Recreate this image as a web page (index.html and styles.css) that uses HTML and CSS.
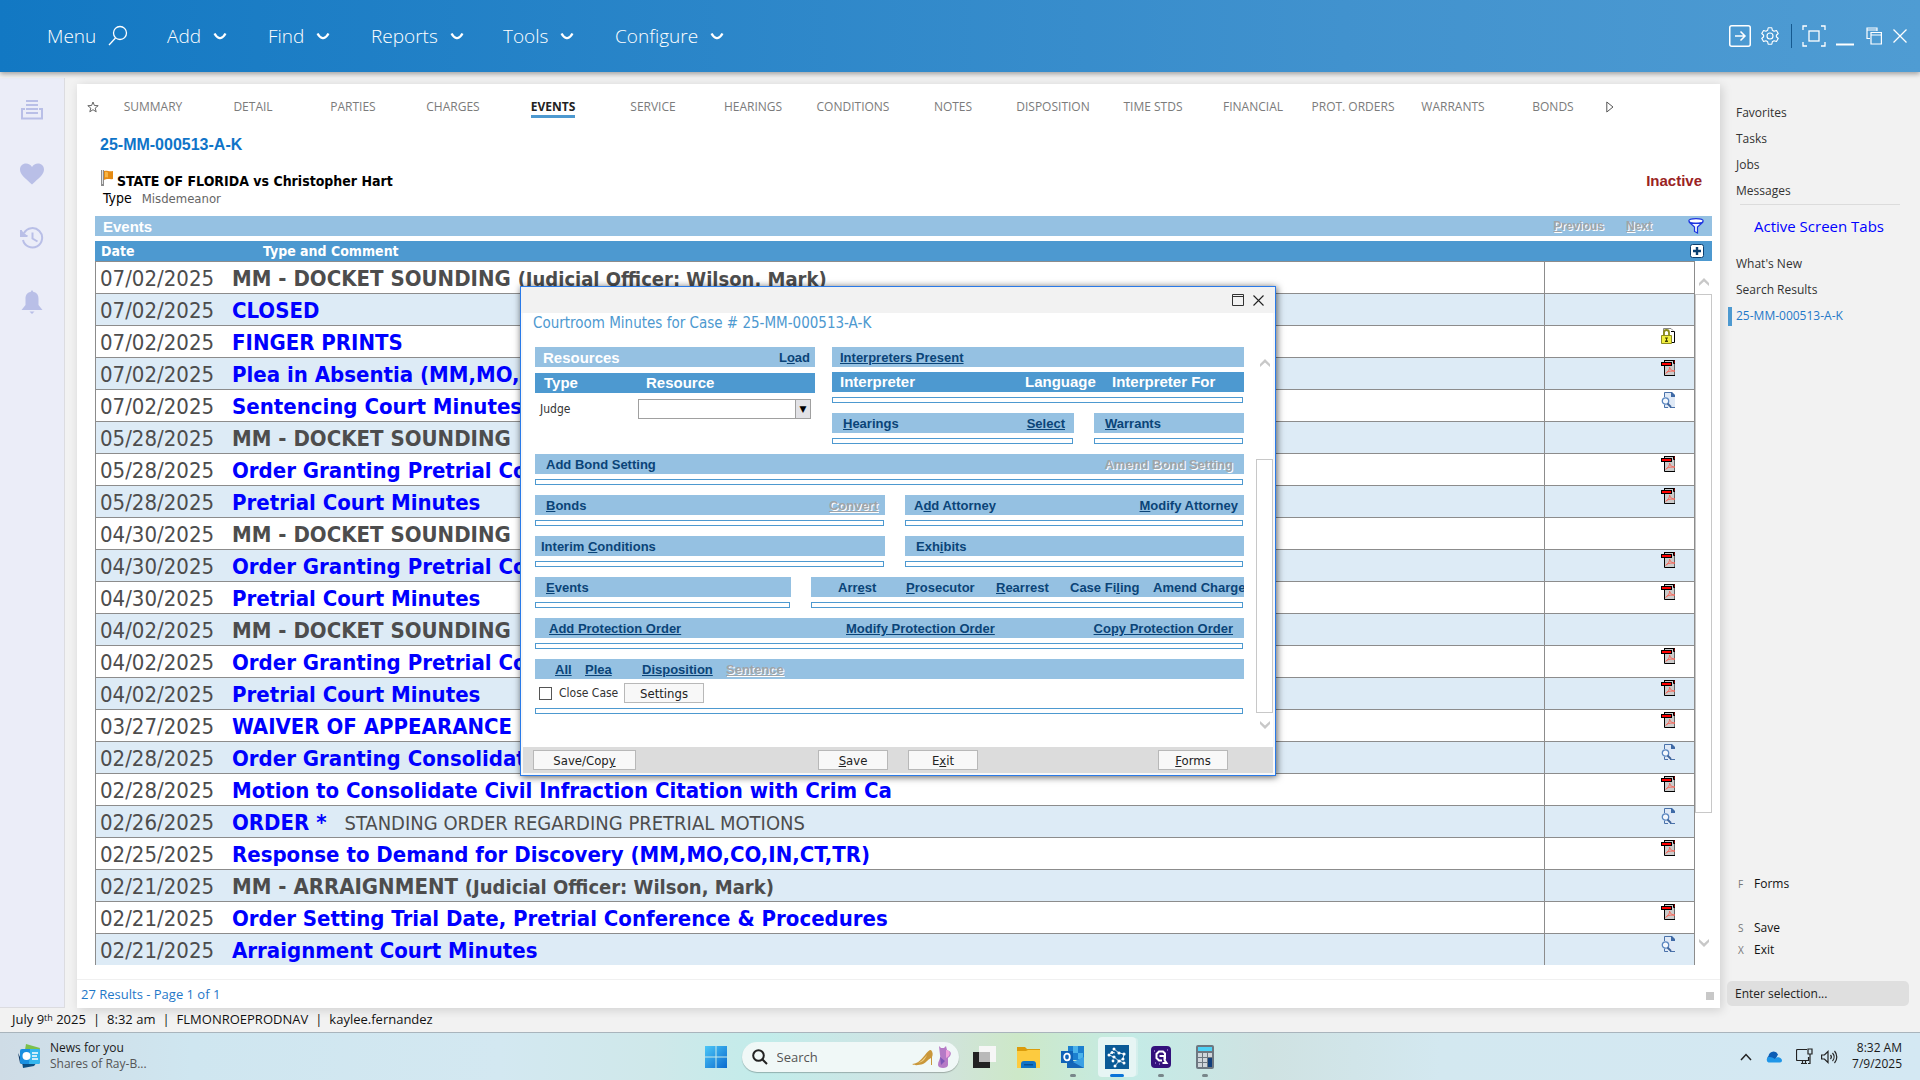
FILE: index.html
```html
<!DOCTYPE html>
<html lang="en">
<head>
<meta charset="utf-8">
<title>25-MM-000513-A-K - Events</title>
<link rel="stylesheet" href="styles.css">
</head>
<body>
<svg class="sprite" aria-hidden="true">
  <symbol id="chev" viewBox="0 0 14 9"><path d="M1.500 1.500 Q3.500 5.500 7 6.300 Q10.500 5.500 12.500 1.500" fill="none" stroke="currentColor" stroke-width="2.200"/></symbol>
  <symbol id="arrow" viewBox="0 0 12 9"><path d="M1 8V5L6 0l5 5v3L6 3.500z" fill="#c8c8c8"/></symbol>
  <symbol id="pdf" viewBox="0 0 14 16">
    <path d="M3.500 0V15.500H14V.5H3.500" fill="#cbcbcb" stroke="#000"/>
    <path d="M0 2h11v4H0z"/><path d="M1 3h9v2H1z" fill="#f00"/>
    <path d="M12.500 0v3.500H14V0z" fill="#f00" stroke="#000"/>
    <path d="M4.500 13.500C7 12 9 9 8.500 7c1 3 3 4.500 5.500 4M5.500 12.500c2-1.500 5-1.500 8.500-1.500" fill="none" stroke="#f8675a"/>
  </symbol>
  <symbol id="doc" viewBox="0 0 14 16">
    <path d="M3 0H11l3 3V16H3z" fill="#dfe9f6"/><path d="M3.500 5V.5H11M3.500 12.500v3H7M9 15.500h5" fill="none" stroke="#4a72aa"/><path d="M10 0h1l3 3v2h-4z" fill="#3f6aa6"/>
    <circle cx="4.500" cy="9" r="3.200" fill="#f4f8fd" stroke="#5a86bf" stroke-width="1.300"/><path d="M6.500 11.500L10 15" stroke="#41669b" stroke-width="1.800"/>
  </symbol>
  <symbol id="lock" viewBox="0 0 14 16">
    <path d="M2.500 7V.5H10l2 2" fill="#fff" stroke="#888"/><path d="M10 3.500h3.500v11H11" fill="none" stroke="#000"/>
    <path d="M3 8V4.500a2.500 2.500 0 0 1 5 0V8" fill="none" stroke="#8a8a18" stroke-width="1.800"/>
    <path d="M.5 7.500h10v8H.5z" fill="#f0ee3f" stroke="#8d8b20"/><path d="M4 9.500h3v1H6v2h1v1.500H4v-1.500h1v-2H4z" fill="#454500"/>
  </symbol>
</svg>

<header class="topbar">
  <nav class="menu" aria-label="Main menu">
    <button class="menu-item menu-home">Menu <svg width="20" height="22" viewBox="0 0 20 22" fill="none" stroke="#fff" stroke-width="1.300"><circle cx="12" cy="8" r="6.500"/><path d="M7.500 13L1 20"/></svg></button>
    <button class="menu-item menu-add">Add <svg width="14" height="9"><use href="#chev"/></svg></button>
    <button class="menu-item menu-find">Find <svg width="14" height="9"><use href="#chev"/></svg></button>
    <button class="menu-item menu-reports">Reports <svg width="14" height="9"><use href="#chev"/></svg></button>
    <button class="menu-item menu-tools">Tools <svg width="14" height="9"><use href="#chev"/></svg></button>
    <button class="menu-item">Configure <svg width="14" height="9"><use href="#chev"/></svg></button>
  </nav>
  <div class="window-tools">
    <button aria-label="Sign out"><svg width="22" height="22" viewBox="0 0 22 22" fill="none" stroke="#fff" stroke-width="1.500"><rect x=".75" y=".75" width="20.500" height="20.500" rx="2"/><path d="M6 11h10M11.500 6.500L16 11l-4.500 4.500"/></svg></button>
    <button aria-label="Settings"><svg width="18" height="18" viewBox="0 0 24 24" fill="none" stroke="#fff" stroke-width="1.500" stroke-linejoin="round"><circle cx="12" cy="12" r="4"/><path d="M9.600 1h4.800l.7 3.300 2.300 1.300 3.200-1 2.400 4.100-2.500 2.300v2l2.500 2.300-2.400 4.100-3.200-1-2.300 1.300-.7 3.300H9.600l-.7-3.300-2.300-1.300-3.200 1L1 15.300 3.500 13v-2L1 8.700l2.400-4.100 3.200 1 2.300-1.300z"/></svg></button>
    <span class="divider"></span>
    <button aria-label="Full screen"><svg width="24" height="22" viewBox="0 0 24 22" fill="none" stroke="#fff" stroke-width="1.300"><path d="M1 5V1h4M19 1h4v4M23 17v4h-4M5 21H1v-4"/><rect x="7" y="6" width="10" height="10"/></svg></button>
    <button aria-label="Minimize"><svg width="18" height="22" viewBox="0 0 18 22"><path d="M0 18.500h18v2H0z" fill="#fff"/></svg></button>
    <button aria-label="Restore" class="restore"><svg width="16" height="18" viewBox="0 0 16 18" fill="none" stroke="#fff" stroke-width="1.200"><path d="M4 11.500H1V1h10v3M1 3h10"/><path d="M5 5.500h10.400V17H5zM5 8h10.400"/></svg></button>
    <button aria-label="Close"><svg width="14" height="14" viewBox="0 0 14 14" stroke="#fff" stroke-width="1.300"><path d="M.5.5l13 13M13.500.5l-13 13"/></svg></button>
  </div>
</header>

<div class="workspace">
  <aside class="rail" aria-label="Shortcuts">
    <button aria-label="Worklist"><svg width="22" height="22" viewBox="0 0 22 22" fill="none" stroke="#b9bfe7" stroke-width="2"><path d="M5 2h12M5 6h12M5 10h12M5 14h12M4 10H1v9.500h20V10h-3"/></svg></button>
    <button aria-label="Favorites"><svg width="24" height="22" viewBox="0 0 24 22" fill="#b9bfe7"><path d="M12 21.500C5 15 0 11.500 0 6.500 0 3 2.600.5 6 .5c2.500 0 4.800 1.300 6 3.500C13.200 1.800 15.500.5 18 .5c3.400 0 6 2.500 6 6 0 5-5 8.500-12 15z"/></svg></button>
    <button aria-label="History"><svg width="24" height="22" viewBox="0 0 24 22" fill="none" stroke="#b9bfe7" stroke-width="2"><path d="M4 6a9.700 9.700 0 1 1-1 7"/><path d="M1 3v6h6.500" fill="#b9bfe7"/><path d="M12.500 5.500v6l5 3"/></svg></button>
    <button aria-label="Notifications"><svg width="22" height="24" viewBox="0 0 22 24" fill="#b9bfe7"><path d="M11 0l1.500 2C16 2.500 17.500 5 17.500 9v6l4 5H.5l4-5V9C4.500 5 6 2.500 9.500 2zM8.500 21.500h5L11 24z"/></svg></button>
  </aside>

  <main class="panel">
    <nav class="tabs" aria-label="Case tabs">
      <svg class="star" width="12" height="12" viewBox="0 0 12 12" fill="none" stroke="#666"><path d="M6 1l1.400 3.500 3.800.2-3 2.400 1 3.700L6 8.700l-3.200 2.100 1-3.700-3-2.400 3.800-.2z"/></svg>
      <a href="#">SUMMARY</a><a href="#">DETAIL</a><a href="#">PARTIES</a><a href="#">CHARGES</a><a href="#" class="current"><span>EVENTS</span></a><a href="#">SERVICE</a><a href="#">HEARINGS</a><a href="#">CONDITIONS</a><a href="#">NOTES</a><a href="#">DISPOSITION</a><a href="#">TIME STDS</a><a href="#">FINANCIAL</a><a href="#">PROT. ORDERS</a><a href="#">WARRANTS</a><a href="#">BONDS</a>
      <svg width="8" height="12" viewBox="0 0 8 12" fill="none" stroke="#555"><path d="M.8 1v10L7 6z"/></svg>
    </nav>
    <h1 class="case-no">25-MM-000513-A-K</h1>
    <div class="party">
      <svg width="14" height="16" viewBox="0 0 14 16"><path d="M1 0h3v16H1z" fill="#8c8c8c"/><path d="M2 0h1v14H2z" fill="#e2e2e2"/><path d="M4 1c3-1 5 1 9 0v8c-3 1-5-1-9 1z" fill="#e58a12"/><path d="M5 2c1-.5 2 0 3 .5v5c-1 0-2-.5-3 0z" fill="#f8b545"/></svg>
      <h2>STATE OF FLORIDA vs Christopher Hart</h2>
      <strong>Inactive</strong>
    </div>
    <p class="case-type">Type <span>Misdemeanor</span></p>

    <section class="events">
      <div class="bar events-bar">
        <h3>Events</h3>
        <a class="off" href="#"><u>P</u>revious</a>
        <a class="off" href="#"><u>N</u>ext</a>
        <button aria-label="Filter"><svg width="16" height="16" viewBox="0 0 16 16" fill="#fff" stroke="#1d35e0" stroke-width="1.200"><ellipse cx="8" cy="3" rx="7.200" ry="2.400"/><path d="M1 4l5.500 5v4.500L9.500 15V9L15 4c-2 1.800-12 1.800-14 0z" fill="#eef2ff"/></svg></button>
      </div>
      <div class="bar dark cols-bar">
        <span>Date</span><span>Type and Comment</span>
        <button aria-label="Add event"><svg width="14" height="14" viewBox="0 0 14 14"><rect x=".5" y=".5" width="13" height="13" rx="2" fill="#fff" stroke="#0b3f70"/><path d="M7 3v8M3 7h8" stroke="#0b3f70" stroke-width="2.400"/></svg></button>
      </div>
      <div class="list">
        <table aria-label="Events">
          <colgroup><col class="c-date"><col><col class="c-icon"></colgroup>
          <tbody>
            <tr><td>07/02/2025</td><td><b>MM - DOCKET SOUNDING <small>(Judicial Officer: Wilson, Mark)</small></b></td><td></td></tr>
            <tr><td>07/02/2025</td><td><a href="#">CLOSED</a></td><td></td></tr>
            <tr><td>07/02/2025</td><td><a href="#">FINGER PRINTS</a></td><td><svg><use href="#lock"/></svg></td></tr>
            <tr><td>07/02/2025</td><td><a href="#">Plea in Absentia (MM,MO,CO,IN,CT,TR)</a></td><td><svg><use href="#pdf"/></svg></td></tr>
            <tr><td>07/02/2025</td><td><a href="#">Sentencing Court Minutes</a></td><td><svg><use href="#doc"/></svg></td></tr>
            <tr><td>05/28/2025</td><td><b>MM - DOCKET SOUNDING</b></td><td></td></tr>
            <tr><td>05/28/2025</td><td><a href="#">Order Granting Pretrial Continuance</a></td><td><svg><use href="#pdf"/></svg></td></tr>
            <tr><td>05/28/2025</td><td><a href="#">Pretrial Court Minutes</a></td><td><svg><use href="#pdf"/></svg></td></tr>
            <tr><td>04/30/2025</td><td><b>MM - DOCKET SOUNDING</b></td><td></td></tr>
            <tr><td>04/30/2025</td><td><a href="#">Order Granting Pretrial Continuance</a></td><td><svg><use href="#pdf"/></svg></td></tr>
            <tr><td>04/30/2025</td><td><a href="#">Pretrial Court Minutes</a></td><td><svg><use href="#pdf"/></svg></td></tr>
            <tr><td>04/02/2025</td><td><b>MM - DOCKET SOUNDING</b></td><td></td></tr>
            <tr><td>04/02/2025</td><td><a href="#">Order Granting Pretrial Continuance</a></td><td><svg><use href="#pdf"/></svg></td></tr>
            <tr><td>04/02/2025</td><td><a href="#">Pretrial Court Minutes</a></td><td><svg><use href="#pdf"/></svg></td></tr>
            <tr><td>03/27/2025</td><td><a href="#">WAIVER OF APPEARANCE</a></td><td><svg><use href="#pdf"/></svg></td></tr>
            <tr><td>02/28/2025</td><td><a href="#">Order Granting Consolidation</a></td><td><svg><use href="#doc"/></svg></td></tr>
            <tr><td>02/28/2025</td><td><a href="#">Motion to Consolidate Civil Infraction Citation with Crim Ca</a></td><td><svg><use href="#pdf"/></svg></td></tr>
            <tr><td>02/26/2025</td><td><a href="#">ORDER *</a><small class="comment">STANDING ORDER REGARDING PRETRIAL MOTIONS</small></td><td><svg><use href="#doc"/></svg></td></tr>
            <tr><td>02/25/2025</td><td><a href="#">Response to Demand for Discovery (MM,MO,CO,IN,CT,TR)</a></td><td><svg><use href="#pdf"/></svg></td></tr>
            <tr><td>02/21/2025</td><td><b>MM - ARRAIGNMENT <small>(Judicial Officer: Wilson, Mark)</small></b></td><td></td></tr>
            <tr><td>02/21/2025</td><td><a href="#">Order Setting Trial Date, Pretrial Conference &amp; Procedures</a></td><td><svg><use href="#pdf"/></svg></td></tr>
            <tr><td>02/21/2025</td><td><a href="#">Arraignment Court Minutes</a></td><td><svg><use href="#doc"/></svg></td></tr>
          </tbody>
        </table>
        <div class="scroll scroll-list">
          <svg width="12" height="9"><use href="#arrow"/></svg>
          <div class="track"><div class="thumb"></div></div>
          <svg class="down" width="12" height="9"><use href="#arrow"/></svg>
        </div>
      </div>
    </section>
    <footer class="panel-foot"><span>27 Results - Page 1 of 1</span><i></i></footer>
  </main>

  <aside class="side">
    <nav class="side-nav" aria-label="Workspace">
      <a href="#">Favorites</a><a href="#">Tasks</a><a href="#">Jobs</a><a href="#">Messages</a>
    </nav>
    <h2>Active Screen Tabs</h2>
    <nav class="side-nav" aria-label="Active screen tabs">
      <a href="#">What's New</a><a href="#">Search Results</a><a href="#" class="current">25-MM-000513-A-K</a>
    </nav>
    <div class="commands">
      <a href="#" class="forms"><kbd>F</kbd>Forms</a>
      <a href="#"><kbd>S</kbd>Save</a>
      <a href="#"><kbd>X</kbd>Exit</a>
    </div>
    <input class="selection" type="text" placeholder="Enter selection..." aria-label="Enter selection">
  </aside>
</div>

<div class="status"><span>July 9<sup>th</sup> 2025</span><span>|</span><span>8:32 am</span><span>|</span><span>FLMONROEPRODNAV</span><span>|</span><span>kaylee.fernandez</span></div>

<section class="dialog" role="dialog" aria-labelledby="dlg-title">
  <div class="dlg-title">
    <button aria-label="Maximize"><svg width="12" height="12" viewBox="0 0 12 12" fill="none" stroke="#333"><path d="M.5.5h11v11H.5zM.5 2.500h11"/></svg></button>
    <button aria-label="Close"><svg width="11" height="11" viewBox="0 0 11 11" stroke="#222" stroke-width="1.100"><path d="M.5.5l10 10M10.500.5l-10 10"/></svg></button>
  </div>
  <div class="dlg-body">
    <h2 id="dlg-title">Courtroom Minutes for Case # 25-MM-000513-A-K</h2>
    <div class="dlg-cols">
      <div class="dlg-content">
        <div class="split split-top">
          <div class="resources">
            <div class="bar b-resources"><h3>Resources</h3><a href="#">L<u>o</u>ad</a></div>
            <div class="bar dark b-type"><span>Type</span><span>Resource</span></div>
            <div class="judge"><label for="judge">Judge</label><span class="combo"><select id="judge"><option></option></select></span></div>
          </div>
          <div>
            <div class="bar b-one"><a href="#" class="full">Interpreters Present</a></div>
            <div class="bar dark b-interp"><span>Interpreter</span><span>Language</span><span>Interpreter For</span></div>
            <div class="strip"></div>
            <div class="split split-hear">
              <div><div class="bar b-hear"><a href="#"><u>H</u>earings</a><a href="#" class="full">Select</a></div><div class="strip"></div></div>
              <div><div class="bar b-hear"><a href="#"><u>W</u>arrants</a></div><div class="strip"></div></div>
            </div>
          </div>
        </div>
        <div class="bar b-pair"><a href="#">Add Bond Setting</a><a href="#" class="off">Amend Bond Setting</a></div>
        <div class="strip"></div>
        <div class="split split-mid">
          <div>
            <div class="bar b-bonds"><a href="#"><u>B</u>onds</a><a href="#" class="off full">Convert</a></div><div class="strip"></div>
            <div class="bar b-interim"><a href="#">Interim <u>C</u>onditions</a></div><div class="strip"></div>
          </div>
          <div>
            <div class="bar b-attorney"><a href="#">A<u>d</u>d Attorney</a><a href="#"><u>M</u>odify Attorney</a></div><div class="strip"></div>
            <div class="bar b-pair"><a href="#">Exh<u>i</u>bits</a></div><div class="strip"></div>
          </div>
        </div>
        <div class="split split-events">
          <div><div class="bar b-pair"><a href="#"><u>E</u>vents</a></div><div class="strip"></div></div>
          <div><div class="bar b-arrest"><a href="#">Arr<u>e</u>st</a><a href="#"><u>P</u>rosecutor</a><a href="#"><u>R</u>earrest</a><a href="#">Case Fi<u>l</u>ing</a><a href="#">Amend Char<u>g</u>e</a></div><div class="strip"></div></div>
        </div>
        <div class="bar b-protect"><a href="#" class="full">Add Protection Order</a><a href="#" class="full">Modify Protection Order</a><a href="#" class="full">Copy Protection Order</a></div>
        <div class="strip"></div>
        <div class="bar b-all"><a href="#" class="full">All</a><a href="#" class="full">Plea</a><a href="#" class="full">Disposition</a><a href="#" class="off full">Sentence</a></div>
        <div class="close-case"><label><input type="checkbox"> Close Case</label><button class="btn">Settings</button></div>
        <div class="strip"></div>
      </div>
      <div class="scroll scroll-dlg">
        <svg width="12" height="9"><use href="#arrow"/></svg>
        <div class="track"><div class="thumb"></div></div>
        <svg class="down" width="12" height="9"><use href="#arrow"/></svg>
      </div>
    </div>
  </div>
  <div class="dlg-foot">
    <button class="btn copy">Save/Cop<u>y</u></button><button class="btn"><u>S</u>ave</button><button class="btn">E<u>x</u>it</button><button class="btn last"><u>F</u>orms</button>
  </div>
</section>

<footer class="taskbar">
  <button class="news">
    <svg width="24" height="24" viewBox="0 0 24 24"><path d="M8 0l14 4-2 8H6z" fill="#7cc04b"/><path d="M3 10l16 8-3 4-11 2z" fill="#0b4f84"/><path d="M0 9l6 12-4-2z" fill="#123a66"/><rect x="2" y="5" width="20" height="15" rx="2" fill="#1a8fe0"/><path d="M12 5h8a2 2 0 0 1 2 2v11a2 2 0 0 1-2 2h-9z" fill="#35b6ee"/><circle cx="8.500" cy="12" r="4" fill="#fff"/><path d="M14 9h6M14 12h5M14 15h6" stroke="#fff" stroke-width="1.500"/></svg>
    <span>News for you<small>Shares of Ray-B...</small></span>
  </button>
  <div class="apps">
    <button aria-label="Start"><svg width="22" height="24" viewBox="0 0 22 24"><defs><linearGradient id="win" x1="0" y1="0" x2="1" y2="1"><stop offset="0" stop-color="#4cc7f7"/><stop offset="1" stop-color="#0a6bd0"/></linearGradient></defs><path d="M0 1h10.500v10.500H0zM11.500 1H22v10.500H11.500zM0 12.500h10.500V23H0zM11.500 12.500H22V23H11.500z" fill="url(#win)"/></svg></button>
    <label class="search">
      <svg width="16" height="16" viewBox="0 0 16 16" fill="none" stroke="#222" stroke-width="2"><circle cx="6.500" cy="6.500" r="5.300"/><path d="M10.500 10.500L15 15"/></svg>
      <input type="text" placeholder="Search" aria-label="Search">
      <svg width="40" height="24" viewBox="0 0 40 24"><path d="M1 19c5 0 9-4 13-9 2-3 4-5 6-5 2 2 2 5 1 7v8h-1v-7c-3 1-5 5-8 6-4 1-8 2-11 0z" fill="#c9973a"/><path d="M5 18c5 0 8-5 11-8-2 5-5 8-11 8z" fill="#f0d28a"/><path d="M28 1l2 2h3l2-2 1 4 2 1c3 1 2 5-1 7v7c0 4-10 4-10 0 0-4 3-6 2-10z" fill="#b57ac6"/><path d="M35 5c5 0 5 6 0 8z" fill="#f0a0dc"/><path d="M29 12l5 4-4 4z" fill="#7e57b8"/></svg>
    </label>
    <button aria-label="Task view"><svg width="24" height="24" viewBox="0 0 24 24"><rect x="6" y="1" width="17" height="16" fill="#f6f6f6"/><rect x="0" y="7" width="17" height="16" fill="#222"/><rect x="6" y="7" width="11" height="10" fill="#b9b9b9"/></svg></button>
    <button aria-label="File Explorer"><svg width="24" height="24" viewBox="0 0 24 24"><path d="M0 2h8l2 2h13v8H0z" fill="#dc9c0b"/><path d="M0 6h9l2-1h12v18H0z" fill="#fdcb3f"/><path d="M4 23v-4a3 3 0 0 1 3-3h9a3 3 0 0 1 3 3v4z" fill="#1173c7"/><path d="M7 19h9v1.500H7z" fill="#0a4f92"/></svg></button>
    <button aria-label="Outlook" class="running"><svg width="24" height="24" viewBox="0 0 24 24"><path d="M7 1h16v14H7z" fill="#1b7fd0"/><path d="M12 1h5v7h-5zM17 8h5v6h-5z" fill="#4bb3ea"/><path d="M6 13l9 4 8-5v11H6z" fill="#1566b8"/><path d="M23 12v11L12 17z" fill="#3aa0e4"/><rect x="0" y="6" width="12" height="12" fill="#0f63b8"/><ellipse cx="6" cy="12" rx="2.800" ry="3.300" fill="none" stroke="#fff" stroke-width="1.800"/></svg></button>
    <button aria-label="Case management" class="running active"><svg width="24" height="24" viewBox="0 0 24 24"><path d="M0 0h24v24H0z" fill="#0a5a97"/><path d="M9 4l5 4 5 1-1 5-4 2-5-4-5-2 3-3 3 1M14 16l-4 5M14 16l5 2" stroke="#fff" stroke-width=".8" fill="none"/><g fill="#fff"><circle cx="9" cy="4" r="1.500"/><circle cx="14" cy="8" r="1.600"/><circle cx="19" cy="9" r="1.600"/><circle cx="7" cy="7.500" r="1.500"/><circle cx="4" cy="10" r="1.500"/><circle cx="9" cy="12" r="1.600"/><circle cx="14" cy="16" r="1.600"/><circle cx="18" cy="14" r="1.500"/><circle cx="19" cy="18" r="1.500"/><circle cx="10" cy="21" r="1.500"/><circle cx="8" cy="16" r="1.400"/></g></svg></button>
    <button aria-label="Q app" class="running"><svg width="20" height="22" viewBox="0 0 20 22"><rect width="20" height="22" rx="4" fill="#33107c"/><path d="M14 13.500V7.500L12 5.500H8L5.500 8v4L8 14.500h3M8.500 10h5v4l2 3h-4" fill="none" stroke="#fff" stroke-width="2"/><path d="M3 5h1M4 17h1M16 4h1M8 18h1" stroke="#d9b6ff"/></svg></button>
    <button aria-label="Calculator" class="running"><svg width="18" height="24" viewBox="0 0 18 24"><rect width="18" height="24" rx="2" fill="#6d7780"/><rect x="2" y="2" width="14" height="4" fill="#4fd1f5"/><g fill="#cfd5da"><path d="M2 8h4v4H2zM7 8h4v4H7zM12 8h4v4h-4zM2 13h4v4H2zM7 13h4v4H7zM2 18h4v4H2zM7 18h4v4H7z"/></g><path d="M12 13h4v9h-4z" fill="#123f7c"/></svg></button>
  </div>
  <div class="tray">
    <button aria-label="Show hidden icons"><svg width="12" height="8" viewBox="0 0 12 8" fill="none" stroke="#222" stroke-width="1.500"><path d="M1 7l5-5.500L11 7"/></svg></button>
    <button aria-label="OneDrive"><svg width="16" height="12" viewBox="0 0 16 12"><path d="M3 10A3 3 0 0 1 2.500 5 5 5 0 0 1 12 3.500L9 9z" fill="#0c5db5"/><path d="M2.500 11.500a3 3 0 0 1 0-5.500C5 5.500 8 7 9 8c1.500-3 7-1.500 7 1.500a2 2 0 0 1-2 2z" fill="#1f96e8"/></svg></button>
    <button aria-label="Network and volume" class="system"><svg width="17" height="17" viewBox="0 0 17 17" fill="none" stroke="#222" stroke-width="1.200"><path d="M11 1.500H1.500a1 1 0 0 0-1 1v9a1 1 0 0 0 1 1h11V9M5 15.500h6M6.500 12.500v3M9.500 12.500v3M12 1h4v5h-4zM14 6v9.500h-2"/></svg>
    <svg width="17" height="14" viewBox="0 0 17 14" fill="none" stroke="#222" stroke-width="1.200"><path d="M.6 5v4h2.800L7 12.500V1.500L3.400 5zM9.500 5a3 3 0 0 1 0 4M11.500 3a6 6 0 0 1 0 8M13.500 1a9 9 0 0 1 0 12"/></svg></button>
    <button class="clock">8:32 AM<br>7/9/2025</button>
  </div>
</footer>
</body>
</html>
```

FILE: styles.css
```css
:root {
  --ui: "Open Sans", "Noto Sans", sans-serif;
  --form: "DejaVu Sans Condensed", "Noto Sans", sans-serif;
  --label: "Liberation Sans", Arial, sans-serif;
  --bar: #95c1e2;
  --bar-dark: #4d99d0;
  --link: #0a4478;
}

* { box-sizing: border-box; }

body {
  margin: 0;
  min-height: 100vh;
  display: flex;
  flex-direction: column;
  position: relative;
  background: #f2f2f2;
  font: 12px/16px var(--ui);
  color: #333;
}

h1, h2, h3, p { margin: 0; font-size: inherit; }
a { color: inherit; text-decoration: none; }
button { padding: 0; border: 0; background: none; font: inherit; color: inherit; }
svg { display: block; flex: none; }
.sprite { position: absolute; width: 0; height: 0; }

/* top bar */
.topbar {
  height: 72px;
  padding: 0 13px 0 47px;
  display: flex;
  align-items: center;
  justify-content: space-between;
  background: linear-gradient(90deg, #1278c3, #4192ce 70%, #4f9cd3);
  box-shadow: 0 2px 5px rgba(0, 0, 0, .35);
  color: #fff;
  position: relative;
  z-index: 1;
}
.menu { display: flex; }
.menu-item { display: flex; align-items: center; gap: 12px; font-size: 19px; line-height: 26px; font-weight: 300; }
.menu-home { width: 120px; }
.menu-add { width: 101px; }
.menu-find { width: 103px; }
.menu-reports { width: 132px; }
.menu-tools { width: 112px; }
.window-tools { display: flex; align-items: center; gap: 10px; }
.divider { width: 1px; height: 24px; margin-left: 2px; background: #15598f; }
.restore { margin: 0 1px 0 2px; }

/* work area */
.workspace { flex: 1; display: flex; }
.rail {
  width: 65px;
  margin-top: 6px;
  padding-top: 12px;
  background: #ebedf8;
  border: solid #dcdce0;
  border-width: 0 1px 1px 0;
}
.rail button { width: 64px; height: 40px; margin-bottom: 24px; display: grid; place-items: center; }

.panel {
  flex: 1;
  min-width: 0;
  margin: 12px 0 0 12px;
  display: flex;
  flex-direction: column;
  background: #fff;
  box-shadow: 2px 2px 10px rgba(0, 0, 0, .15);
}
.tabs { height: 46px; display: flex; align-items: center; color: #7b7b7b; }
.tabs .star { margin: 0 4px 0 10px; }
.tabs a { width: 100px; text-align: center; }
.tabs a + svg { margin-left: 3px; }
.tabs .current { color: #222; font-weight: 700; }
.tabs .current span { border-bottom: 3px solid var(--bar-dark); }
.case-no { padding-left: 23px; font: 700 16px/30px var(--label); color: #0f74c8; }
.party { padding: 11px 18px 0 23px; display: flex; align-items: center; gap: 3px; line-height: 20px; }
.party h2 { flex: 1; font: 700 14px/20px var(--form); color: #000; }
.party svg { margin-top: -6px; }
.party strong { font: 700 15px/20px var(--label); color: #9a2323; }
.case-type { padding-left: 26px; font: 14px/15px var(--form); color: #000; }
.case-type span { margin-left: 6px; font-size: 13px; color: #666; }

.bar {
  height: 20px;
  overflow: hidden;
  white-space: nowrap;
  background: var(--bar);
  font: 700 13px/21px var(--label);
  color: var(--link);
}
.bar h3 { font-size: 15px; color: #fff; }
.dark { background: var(--bar-dark); color: #fff; }
.off { color: #a0a4a8; text-shadow: 1px 1px #fff; }
.full { text-decoration: underline; }

.events { margin: 10px 8px 0 18px; }
.events-bar { display: flex; align-items: center; padding: 0 8px; }
.events-bar h3 { flex: 1; }
.events-bar .off { margin-right: 22px; font-size: 12px; line-height: 24px; }
.events-bar .off + button { margin-left: 14px; }
.cols-bar { display: grid; grid-template-columns: 162px 1fr 14px; align-items: center; margin-top: 5px; padding: 0 8px 0 6px; font: 700 14px/20px var(--form); }
.list { display: flex; }
table { flex: 1; border-collapse: separate; border-spacing: 0; table-layout: fixed; border-left: 1px solid #8c8c8c; font: 22px/29px var(--form); color: #4d4d4d; }
.c-date { width: 132px; }
.c-icon { width: 151px; }
td { height: 32px; padding: 1px 4px 0; border-top: 1px solid #8c8c8c; white-space: nowrap; overflow: hidden; }
td:last-child { border-left: 1px solid #8c8c8c; border-right: 1px solid #8c8c8c; vertical-align: top; }
td svg { width: 14px; height: 16px; margin: 1px 15px 0 auto; }
tr:nth-child(even) { background: #ddebf6; }
td a { font-weight: 700; color: #00f; }
td small { font-size: 20px; line-height: 20px; }
.comment { margin-left: 18px; }

.scroll { width: 17px; display: flex; flex-direction: column; align-items: center; }
.track { flex: 1; align-self: stretch; }
.thumb { border: 1px solid #c8c8c8; background: #fff; }
.down { transform: rotate(180deg); }
.scroll-list { padding: 17px 0 18px; }
.scroll-list .track { margin-top: 7px; }
.scroll-list .thumb { height: 519px; }

.panel-foot {
  margin-top: auto;
  height: 29px;
  padding: 0 6px 0 4px;
  display: flex;
  align-items: center;
  justify-content: space-between;
  border-top: 1px solid #f0f0f0;
  font-size: 13px;
  color: #1f78c8;
}
.panel-foot i { width: 8px; height: 8px; margin-top: 4px; background: #c8c8c8; }

/* right column */
.side { width: 200px; padding: 28px 11px 2px 7px; display: flex; flex-direction: column; }
.side-nav a { display: flex; align-items: center; height: 26px; padding-left: 9px; }
.side-nav .current { color: #1f78c8; }
.side-nav .current::before { content: ""; width: 4px; height: 19px; margin: 0 4px 0 -8px; background: var(--bar-dark); }
.side h2 { margin: 0 9px 12px 13px; padding: 8px 0 0 14px; border-top: 1px solid #dcdcdc; font-size: 15px; font-weight: 400; line-height: 26px; color: #00f; }
.commands { margin-top: auto; color: #111; }
.commands a { display: flex; align-items: center; height: 22px; padding-left: 11px; }
.commands .forms { margin-bottom: 22px; }
kbd { width: 16px; font: 10px/16px var(--ui); color: #777; }
.selection { width: 100%; height: 25px; margin-top: 20px; padding: 0 8px; border: 0; border-radius: 5px; background: #dfdfdf; font: 12px/16px var(--ui); }
.selection::placeholder { color: #222; opacity: 1; }

.status { height: 24px; padding: 0 12px; display: flex; gap: 7px; font-size: 13px; line-height: 22px; color: #111; }
sup { font-size: 9px; line-height: 1px; vertical-align: 3px; }

/* dialog floats over the event list */
.dialog {
  position: absolute;
  left: 520px;
  top: 286px;
  z-index: 2;
  width: 756px;
  padding: 0 2px 2px;
  border: 1px solid #2a7ae8;
  background: #f8f8f8;
  box-shadow: 1px 1px 7px rgba(0, 0, 0, .65);
}
.dlg-title { height: 26px; margin: 0 -2px; padding-right: 11px; display: flex; align-items: center; justify-content: flex-end; gap: 9px; background: #f2f2f2; }
.dlg-body { background: #fff; }
.dlg-body h2 { padding-left: 10px; font: 15px/20px var(--form); color: var(--bar-dark); }
.dlg-cols { display: flex; justify-content: space-between; padding: 14px 0 18px 12px; }
.dlg-content { width: 709px; padding-bottom: 15px; }
.split { display: grid; }
.split-top { grid-template-columns: 280px minmax(0, 1fr); column-gap: 17px; }
.split-hear { grid-template-columns: 242px minmax(0, 1fr); column-gap: 20px; }
.split-mid { grid-template-columns: 350px minmax(0, 1fr); column-gap: 20px; }
.split-events { grid-template-columns: 256px minmax(0, 1fr); column-gap: 20px; }
.strip { height: 6px; margin: 5px 1px 10px 0; border: 1px solid var(--bar-dark); background: #fff; }
.dlg-content > .strip:last-child { margin-bottom: 0; }
.resources { display: flex; flex-direction: column; gap: 6px; }
.dialog .dark { font-size: 15px; line-height: 20px; }
.dialog .bar { display: flex; justify-content: space-between; }
.b-resources { padding: 0 5px 0 8px; }
.dialog .b-type { display: grid; grid-template-columns: 102px 1fr; padding-left: 9px; }
.b-one { padding-left: 8px; }
.dialog .b-interp { display: grid; grid-template-columns: 185px 87px 1fr; padding-left: 8px; margin-top: 5px; }
.b-hear { padding: 0 9px 0 11px; }
.b-pair { padding: 0 11px; }
.b-bonds { padding: 0 7px 0 11px; }
.b-interim { padding: 0 6px; }
.b-attorney { padding: 0 6px 0 9px; }
.dialog .b-arrest { display: grid; grid-template-columns: 68px 90px 74px 83px 1fr; padding-left: 27px; }
.dialog .b-protect { display: grid; grid-template-columns: 297px 1fr auto; padding: 0 11px 0 14px; }
.dialog .b-all { display: grid; grid-template-columns: 30px 57px 84px 1fr; justify-items: start; padding-left: 20px; }
.judge { display: grid; grid-template-columns: 98px 173px; align-items: center; height: 20px; padding-left: 5px; font: 12px/20px var(--form); }
.combo { position: relative; height: 20px; }
.combo::after { content: "\25BC"; position: absolute; top: 1px; right: 1px; width: 14px; height: 18px; border-left: 1px solid #a0a0a0; background: #e2e2e6; font: 9px/18px "DejaVu Sans", sans-serif; text-align: center; color: #000; pointer-events: none; }
select { display: block; width: 100%; height: 20px; appearance: none; border: 1px solid #a0a0a0; border-radius: 0; background: #fff; }
.close-case { display: flex; align-items: center; height: 20px; margin-top: 4px; padding-left: 4px; font: 12px/22px var(--form); }
.close-case label { display: flex; align-items: center; gap: 7px; width: 85px; white-space: nowrap; }
.close-case input { appearance: none; width: 13px; height: 13px; margin: 0; border: 1px solid #555; background: #fff; }
.close-case .btn { width: 80px; }
.btn { width: 70px; height: 20px; border: 1px solid #b8b8b8; background: #f8f8f8; font: 13px/19px var(--form); color: #222; }
.scroll-dlg { padding-top: 12px; }
.scroll-dlg .track { display: flex; flex-direction: column; justify-content: flex-end; margin-bottom: 7px; }
.scroll-dlg .thumb { height: 254px; }
.dlg-foot { height: 26px; padding: 3px 45px 3px 10px; display: flex; gap: 20px; background: #dcdcdc; }
.dlg-foot .copy { width: 103px; margin-right: 162px; }
.dlg-foot .last { margin-left: auto; }

/* desktop taskbar */
.taskbar {
  height: 48px;
  padding: 0 18px;
  display: grid;
  grid-template-columns: 1fr auto 1fr;
  align-items: center;
  border-top: 1px solid #a9b4bc;
  background: linear-gradient(90deg, #cfdce6, #cfe6f0 10%, #d3e8f1 26%, #cfe8ea 34%, #c2ecea 40%, #d2e2e2 48%, #cde8c8 53%, #c4ebe6 59%, #cfe2e2 66%, #d3e8f0 75%, #d4e8f3);
  color: #1a1a1a;
}
.news { display: flex; gap: 8px; justify-self: start; margin-bottom: 2px; text-align: left; font-size: 12px; line-height: 16px; }
.news svg { margin-top: 4px; }
.news small { display: block; font-size: 12px; color: #555; }
.apps { display: flex; align-items: center; }
.apps button { width: 44px; height: 46px; display: grid; place-items: center; position: relative; }
.search { width: 217px; height: 30px; margin: 0 4px; padding: 0 8px 0 10px; display: flex; align-items: center; gap: 9px; border-radius: 15px; background: #f0f8f7; box-shadow: 0 1px 1px rgba(0, 0, 0, .25); }
.search input { flex: 1; min-width: 0; border: 0; padding: 0; background: none; font: 13px/20px var(--ui); }
.search input::placeholder { color: #555; opacity: 1; }
.running::after { content: ""; position: absolute; bottom: 3px; left: 19px; width: 6px; height: 3px; border-radius: 2px; background: #78868a; }
.apps .active { width: 38px; height: 40px; margin: 0 3px; border-radius: 4px; background: #e6f5f4; box-shadow: 3px 0 0 -1px #d4efec; }
.active::after { left: 12px; bottom: 0; width: 14px; background: #0a74d8; }
.tray { display: flex; align-items: center; justify-self: end; gap: 14px; }
.tray button { display: flex; align-items: center; gap: 8px; }
.tray .clock { display: block; margin-bottom: 2px; text-align: right; font-size: 12px; line-height: 16px; }
```
